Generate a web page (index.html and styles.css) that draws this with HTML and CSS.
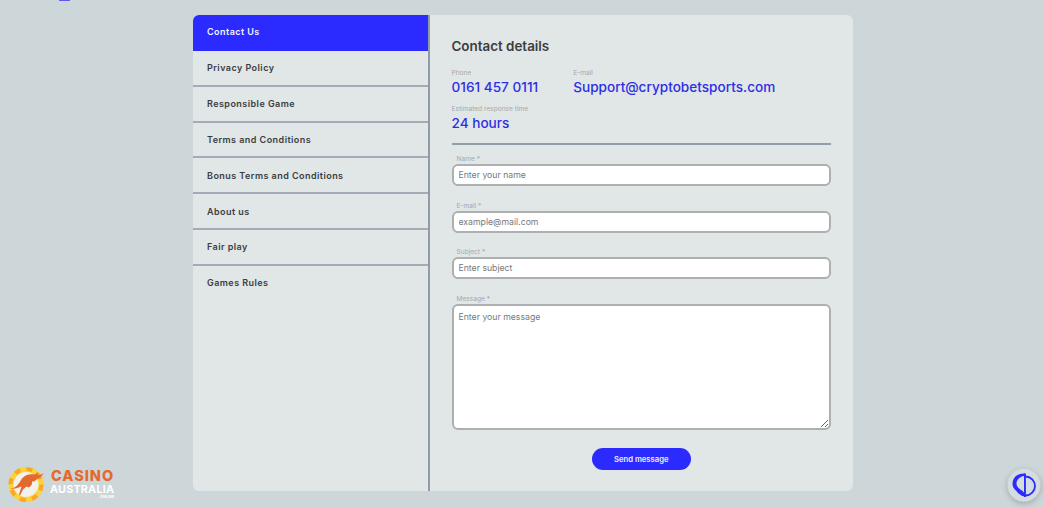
FILE: index.html
```html
<!DOCTYPE html>
<html lang="en">
<head>
<meta charset="utf-8">
<title>Contact Us</title>
<link rel="stylesheet" href="styles.css">
</head>
<body>
<div class="top-blip"></div>
<main class="card">
  <nav class="side">
    <a class="side-item active">Contact Us</a>
    <a class="side-item">Privacy Policy</a>
    <a class="side-item">Responsible Game</a>
    <a class="side-item">Terms and Conditions</a>
    <a class="side-item">Bonus Terms and Conditions</a>
    <a class="side-item">About us</a>
    <a class="side-item">Fair play</a>
    <a class="side-item last">Games Rules</a>
  </nav>
  <section class="content">
    <h1 class="title">Contact details</h1>
    <div class="info-row">
      <div class="info"><div class="info-label">Phone</div><div class="info-value">0161 457 0111</div></div>
      <div class="info"><div class="info-label">E-mail</div><div class="info-value">Support@cryptobetsports.com</div></div>
    </div>
    <div class="info"><div class="info-label">Estimated response time</div><div class="info-value">24 hours</div></div>
    <hr class="rule">
    <form class="form">
      <label class="field"><span class="field-label">Name *</span><input class="input" placeholder="Enter your name"></label>
      <label class="field"><span class="field-label">E-mail *</span><input class="input" placeholder="example@mail.com"></label>
      <label class="field"><span class="field-label">Subject *</span><input class="input" placeholder="Enter subject"></label>
      <label class="field"><span class="field-label">Message *</span><textarea class="input area" placeholder="Enter your message"></textarea></label>
      <button class="send" type="button">Send message</button>
    </form>
  </section>
</main>
<div class="logo">
  <svg class="logo-mark" width="38" height="36" viewBox="1 -0.5 38 36">
    <circle cx="19" cy="18" r="17.5" fill="#fdd23a"/>
    <circle cx="19" cy="18" r="15.5" fill="none" stroke="#f9a825" stroke-width="4" stroke-dasharray="6 6.17"/>
    <circle cx="19" cy="18" r="12.5" fill="#f1f1ee"/>
    <path d="M3 22 C9 22 12 17 15 12 C18 8 23 7 28 8 L31 5.5 L30.5 9 L37 7 L33 11 C30 12 29 14 27 15 L25 15 C25.5 18 24 20 21.5 21 L19.5 20 L16 23 L13 29 L12 28 L14.5 20 C11 21.5 7 23 3 22 Z" fill="#e4692f"/>
  </svg>
  <div class="logo-text">
    <div class="logo-casino">CASINO</div>
    <div class="logo-aus">AUSTRALIA</div>
    <div class="logo-online">ONLINE</div>
  </div>
</div>
<div class="fab">
  <svg width="26" height="28" viewBox="0 0 26 28">
    <circle cx="14.5" cy="15" r="9.5" fill="none" stroke="#2b2bff" stroke-width="1.8"/>
    <path d="M14 2.5 C6 2 1.5 7 1.5 12.5 C1.5 18 6 20.5 9 22 L14 26 Z" fill="#2b2bff"/>
    <path d="M13 5 C8.5 5.5 5.5 9 5.5 12.5 C5.5 16 8.5 18 11 19.5 L13 21.5 Z" fill="#d5dcde"/>
    <path d="M14 2.5 V26" stroke="#2b2bff" stroke-width="1.8"/>
  </svg>
</div>
</body>
</html>
```
FILE: styles.css
```css
* { box-sizing: border-box; }
html, body { height: 100%; }
body {
  margin: 0;
  height: 508px;
  overflow: hidden;
  background: #cdd6d8;
  font-family: Inter, "Liberation Sans", sans-serif;
  display: flex;
  justify-content: center;
  padding: 15px 0 17px 2px;
}
.top-blip {
  position: absolute;
  left: 59px;
  top: 0;
  width: 11px;
  height: 1px;
  background: #5a5aee;
}
.card {
  width: 660px;
  height: 476px;
  background: #e1e6e7;
  border-radius: 6px;
  display: flex;
  overflow: hidden;
}
.side {
  width: 237px;
  flex: none;
  border-right: 2px solid #8f9ba8;
  display: flex;
  flex-direction: column;
}
.side-item {
  height: 35.85px;
  flex: none;
  display: flex;
  align-items: center;
  padding: 0 14px;
  font-size: 9px;
  font-weight: 600;
  letter-spacing: 0.45px;
  color: #3a3d42;
  border-bottom: 2px solid #a2acb6;
}
.side-item.active {
  background: #2b2bff;
  color: #f4f4ff;
  border-bottom-color: #2b2bff;
}
.side-item.last { border-bottom: 0; padding-bottom: 2px; }
.content {
  flex: 1;
  padding: 22px 22px 0 21.5px;
}
.title {
  margin: 0 0 13.5px;
  font-size: 13.4px;
  line-height: 18px;
  font-weight: 600;
  color: #3b3d40;
}
.info-row {
  display: flex;
  gap: 35px;
  margin-bottom: 9px;
}
.info-label {
  font-size: 6.6px;
  line-height: 9px;
  color: #a4a9ab;
}
.info-value {
  font-size: 13.6px;
  line-height: 18px;
  font-weight: 500;
  color: #2e2ee6;
}
.rule {
  margin: 11px 0 10.5px;
  height: 2px;
  border: 0;
  background: #929eaa;
}
.form { display: flex; flex-direction: column; }
.field { display: block; margin-bottom: 15.7px; }
.field-label {
  display: block;
  padding-left: 5px;
  font-size: 6.6px;
  line-height: 9px;
  color: #a4a9ab;
}
.input {
  display: block;
  width: 100%;
  height: 22px;
  padding: 0 5px;
  background: #fff;
  border: 2px solid #adafb1;
  border-radius: 6px;
  outline: 0;
  font-family: inherit;
  font-size: 8.7px;
  color: #333;
}
.input::placeholder { color: #77797c; opacity: 1; }
.area {
  height: 126px;
  padding: 6px 5px;
}
.send {
  align-self: center;
  width: 99px;
  height: 22px;
  margin-top: 2.3px;
  border: 0;
  border-radius: 11px;
  background: #2b2bff;
  color: #eeeeff;
  font-family: inherit;
  font-size: 7.7px;
  font-weight: 600;
}
.logo {
  position: absolute;
  left: 8px;
  top: 466px;
  display: flex;
  gap: 4px;
}
.logo-mark { flex: none; }
.logo-text { padding-top: 4px; text-align: right; }
.logo-casino {
  font-size: 14.5px;
  line-height: 12px;
  font-weight: 800;
  letter-spacing: 1px;
  color: #e4692f;
}
.logo-aus {
  margin-top: 3px;
  font-size: 10.8px;
  line-height: 9px;
  font-weight: 700;
  letter-spacing: 0.2px;
  color: #fff;
}
.logo-online {
  font-size: 3.8px;
  line-height: 5px;
  font-weight: 700;
  color: #fff;
}
.fab {
  position: absolute;
  left: 1007px;
  top: 468px;
  width: 34px;
  height: 34px;
  border-radius: 50%;
  background: #d5dcde;
  border: 1px dotted #bcc4c7;
  box-shadow: 0 2px 5px rgba(90,100,110,.35);
  display: flex;
  align-items: center;
  justify-content: center;
}
```
